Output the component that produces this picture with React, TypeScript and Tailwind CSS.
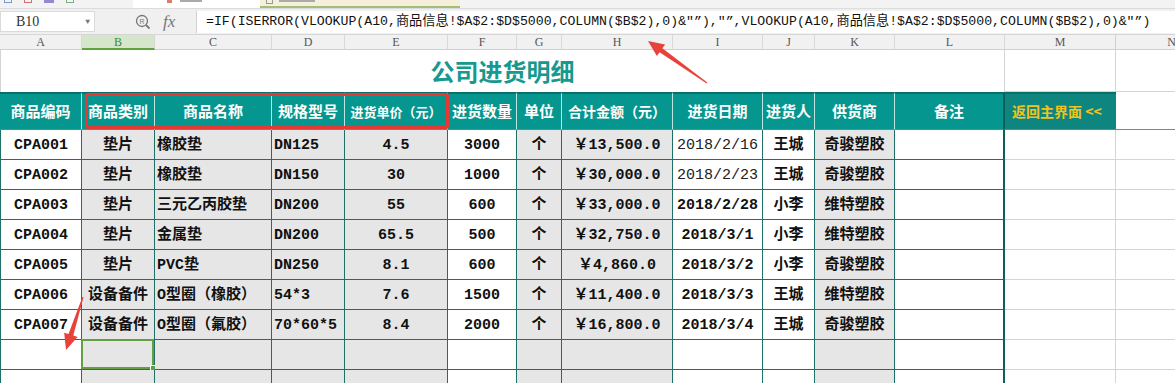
import React from 'react';

type Col = { w: string; bg: string; align: string; pad?: string };

const COLS: Col[] = [
  { w: 'w-[82px]', bg: 'bg-white', align: 'justify-center' },
  { w: 'w-[73px]', bg: 'bg-[#e6e6e6]', align: 'justify-center' },
  { w: 'w-[117px]', bg: 'bg-[#e6e6e6]', align: 'justify-start', pad: 'pl-[2px]' },
  { w: 'w-[73px]', bg: 'bg-[#e6e6e6]', align: 'justify-start', pad: 'pl-[2px]' },
  { w: 'w-[103px]', bg: 'bg-[#e6e6e6]', align: 'justify-center' },
  { w: 'w-[69px]', bg: 'bg-white', align: 'justify-center' },
  { w: 'w-[45px]', bg: 'bg-[#e6e6e6]', align: 'justify-center' },
  { w: 'w-[111px]', bg: 'bg-[#e6e6e6]', align: 'justify-center' },
  { w: 'w-[90px]', bg: 'bg-white', align: 'justify-center' },
  { w: 'w-[52px]', bg: 'bg-white', align: 'justify-center' },
  { w: 'w-[80px]', bg: 'bg-[#e6e6e6]', align: 'justify-center' },
  { w: 'w-[110px]', bg: 'bg-white', align: 'justify-center' },
];

const LETTERS = ['A', 'B', 'C', 'D', 'E', 'F', 'G', 'H', 'I', 'J', 'K', 'L'];

const HEADERS = [
  '商品编码', '商品类别', '商品名称', '规格型号', '进货单价（元）', '进货数量',
  '单位', '合计金额（元）', '进货日期', '进货人', '供货商', '备注',
];

const ROWS: string[][] = [
  ['CPA001', '垫片', '橡胶垫', 'DN125', '4.5', '3000', '个', '￥13,500.0', '2018/2/16', '王城', '奇骏塑胶', ''],
  ['CPA002', '垫片', '橡胶垫', 'DN150', '30', '1000', '个', '￥30,000.0', '2018/2/23', '王城', '奇骏塑胶', ''],
  ['CPA003', '垫片', '三元乙丙胶垫', 'DN200', '55', '600', '个', '￥33,000.0', '2018/2/28', '小李', '维特塑胶', ''],
  ['CPA004', '垫片', '金属垫', 'DN200', '65.5', '500', '个', '￥32,750.0', '2018/3/1', '小李', '维特塑胶', ''],
  ['CPA005', '垫片', 'PVC垫', 'DN250', '8.1', '600', '个', '￥4,860.0', '2018/3/2', '小李', '奇骏塑胶', ''],
  ['CPA006', '设备备件', 'O型圈（橡胶）', '54*3', '7.6', '1500', '个', '￥11,400.0', '2018/3/3', '王城', '维特塑胶', ''],
  ['CPA007', '设备备件', 'O型圈（氟胶）', '70*60*5', '8.4', '2000', '个', '￥16,800.0', '2018/3/4', '王城', '奇骏塑胶', ''],
  ['', '', '', '', '', '', '', '', '', '', '', ''],
  ['', '', '', '', '', '', '', '', '', '', '', ''],
];

const FORMULA =
  '=IF(ISERROR(VLOOKUP(A10,商品信息!$A$2:$D$5000,COLUMN($B$2),0)&"”),"”,VLOOKUP(A10,商品信息!$A$2:$D$5000,COLUMN($B$2),0)&"”)';

function GrayTail({ h }: { h: string }) {
  return (
    <>
      <div className={`w-[111px] ${h} shrink-0 bg-white border-r border-b border-[#d4d4d4]`} />
      <div className={`flex-1 ${h} bg-white border-b border-[#d4d4d4]`} />
    </>
  );
}

export default function App() {
  return (
    <div
      className="relative w-[1175px] h-[383px] overflow-hidden bg-white select-none"
      style={{ fontFamily: '"Liberation Mono", "Noto Sans CJK SC", monospace' }}
    >
      {/* tab strip */}
      <div className="flex h-[9px] bg-[#f3f3f3] border-b border-[#dcdcdc]">
        <div className="flex items-start gap-[12px] pl-[4px] w-[133px]">
          <div className="w-[8px] h-[3px] border border-t-0 border-[#7d98d0]" />
          <div className="w-[8px] h-[3px] border border-t-0 border-[#d07070]" />
          <div className="w-[10px] h-[3px] bg-[#9a86d0]" />
          <div className="w-[8px] h-[3px] border border-t-0 border-[#7ab07f]" />
        </div>
        <div className="w-[127px] bg-white flex items-start pl-[34px]">
          <div className="w-[5px] h-[3px] bg-[#e07a6e]" />
          <div className="ml-[8px] w-[22px] h-[2px] bg-[#aaa]" />
        </div>
        <div className="w-[200px] bg-[#f6efd9] border-b-2 border-[#9fbf7a] flex items-start pl-[6px]">
          <div className="w-[7px] h-[4px] border border-t-0 border-[#999]" />
          <div className="ml-[6px] w-[36px] h-[2px] bg-[#aaa]" />
        </div>
      </div>

      {/* formula bar */}
      <div className="flex items-center h-[26px] bg-[#f0f0f0] border-b border-[#d6d6d6]">
        <div className="flex items-center w-[95px] h-[21px] bg-white border border-[#dadada] pl-[15px] pr-[4px]">
          <span className="text-[14px] text-[#333]" style={{ fontFamily: '"Liberation Serif", serif' }}>B10</span>
          <span className="ml-auto text-[8px] text-[#777]">▼</span>
        </div>
        <div className="flex items-center w-[101px] h-full pl-[40px] gap-[12px]">
          <svg width="16" height="16" viewBox="0 0 16 16">
            <circle cx="7" cy="7" r="5.5" fill="none" stroke="#777" strokeWidth="1.3" />
            <line x1="11" y1="11" x2="14.5" y2="14.5" stroke="#777" strokeWidth="1.8" />
            <text x="7" y="9.6" fontSize="7" textAnchor="middle" fill="#777" fontFamily="Liberation Sans">R</text>
          </svg>
          <span className="text-[17px] italic text-[#777]" style={{ fontFamily: '"Liberation Serif", serif' }}>fx</span>
        </div>
        <div className="flex-1 flex items-center h-[22px] bg-white border-l border-[#d0d0d0] pl-[9px] overflow-hidden whitespace-nowrap">
          <span className="text-[13.2px] text-[#111]">{FORMULA}</span>
        </div>
      </div>

      {/* column letters */}
      <div className="flex h-[15px] bg-[#f1f1f1]" style={{ fontFamily: '"Liberation Serif", serif' }}>
        {COLS.map((c, i) => (
          <div
            key={i}
            className={`${c.w} shrink-0 flex items-center justify-center text-[12px] leading-none border-r border-[#d8d8d8] ${
              i === 1 ? 'bg-[#d6e6cb] text-[#3f8a2c] border-b-2 border-b-[#5ea33d]' : 'text-[#555] border-b border-b-[#cfcfcf]'
            }`}
          >
            {LETTERS[i]}
          </div>
        ))}
        <div className="w-[111px] shrink-0 flex items-center justify-center text-[12px] leading-none text-[#555] border-r border-b border-[#d0d0d0]">M</div>
        <div className="w-[111px] shrink-0 flex items-center justify-center text-[12px] leading-none text-[#555] border-b border-[#d0d0d0]">N</div>
      </div>

      {/* row 1: title */}
      <div className="flex h-[42px]">
        <div className="w-[1005px] shrink-0 flex items-center justify-center border-l border-r border-[#d4d4d4]">
          <span
            className="text-[24px] font-bold text-[#16998e]"
            style={{ fontFamily: '"Noto Sans CJK SC", sans-serif' }}
          >
            公司进货明细
          </span>
        </div>
        <GrayTail h="h-[42px]" />
      </div>

      {/* row 2: headers */}
      <div className="flex h-[38px]" style={{ fontFamily: '"Noto Sans CJK SC", sans-serif' }}>
        {COLS.map((c, i) => (
          <div
            key={i}
            className={`${c.w} shrink-0 flex items-center justify-center bg-[#05978f] text-white font-bold border-t-2 border-t-[#0a6e69] border-b border-b-[#4f9a63] ${
              i === 11 ? 'border-r-2 border-r-[#0c5f5a]' : 'border-r border-r-[#bfe3df]'
            } ${i === 4 ? 'text-[13px]' : i === 7 ? 'text-[14px]' : 'text-[15px]'}`}
          >
            {HEADERS[i]}
          </div>
        ))}
        <div className="w-[111px] shrink-0 flex items-center pl-[7px] bg-[#0f8580] text-[#f0c41c] font-bold text-[14px] border-t-2 border-t-[#0a6e69] border-b border-b-[#4f9a63]">
          返回主界面 &lt;&lt;
        </div>
        <div className="flex-1 bg-white border-b border-[#5f9e5f]" />
      </div>

      {/* data rows */}
      {ROWS.map((row, r) => (
        <div key={r} className="flex h-[30px]">
          {COLS.map((c, i) => {
            const light = i === 8 && r < 2;
            return (
              <div
                key={i}
                className={`${c.w} ${c.bg} ${c.align} ${c.pad ?? ''} relative shrink-0 flex items-center pt-[3px] whitespace-nowrap text-[15px] border-b border-[#1f6e68] ${
                  light ? 'font-normal text-[#222]' : 'font-bold text-[#111]'
                } ${i === 0 ? 'border-l' : ''} ${i === 11 ? 'border-r-2 border-r-[#0c5f5a]' : 'border-r'}`}
              >
                {row[i]}
                {r === 7 && i === 1 && (
                  <div className="absolute -left-[1px] -top-[1px] right-0 bottom-0 border-2 border-[#62a043]">
                    <div className="absolute -right-[4px] -bottom-[4px] w-[6px] h-[6px] bg-[#62a043] border border-white" />
                  </div>
                )}
              </div>
            );
          })}
          <GrayTail h="h-[30px]" />
        </div>
      ))}

      {/* annotation overlay: red box and arrows */}
      <div className="absolute left-[85px] top-[93px] w-[364px] h-[36px] border-[3px] border-[#e23b35] rounded-[3px] pointer-events-none" />
      <svg className="absolute left-0 top-0 pointer-events-none" width="1175" height="383">
        <polygon
          points="707.3,82.6 662.4,48.3 665.1,44.6 648,41 656.9,56 659.6,52.3 706.7,83.4"
          fill="#e8433b"
        />
        <polygon
          points="83.5,297.2 73.3,335.6 77.6,336.9 66,350 64.2,332.7 68.5,334 82.5,296.8"
          fill="#e8433b"
        />
      </svg>
    </div>
  );
}
